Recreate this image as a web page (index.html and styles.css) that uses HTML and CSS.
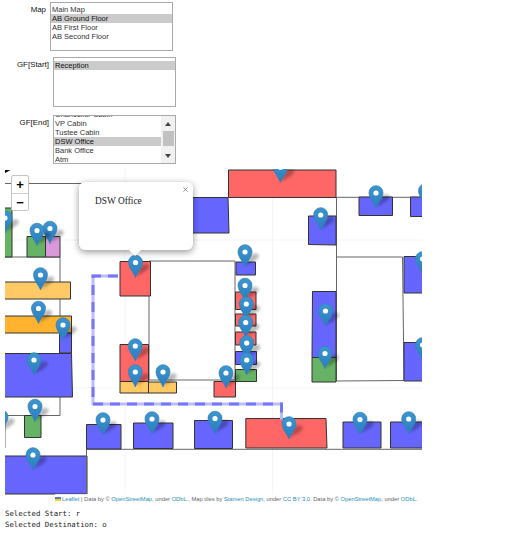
FILE: index.html
```html
<!DOCTYPE html>
<html lang="en">
<head>
<meta charset="utf-8">
<title>Floor map</title>
<link rel="stylesheet" href="styles.css">
</head>
<body>
<form class="controls">
  <div class="field field-map"><label>Map</label>
    <ul class="list"><li>Main Map</li><li class="selected">AB Ground Floor</li><li>AB First Floor</li><li>AB Second Floor</li></ul></div>
  <div class="field field-start"><label>GF[Start]</label>
    <ul class="list"><li class="selected">Reception</li></ul></div>
  <div class="field field-end"><label>GF[End]</label>
    <div class="list scroll-list">
      <ul class="options"><li>Chancellor Cabin</li><li>VP Cabin</li><li>Tustee Cabin</li><li class="selected">DSW Office</li><li>Bank Office</li><li>Atm</li></ul>
      <div class="scrollbar"><i class="up"></i><i class="thumb"></i><i class="down"></i></div>
    </div></div>
</form>
<main class="map">
<svg class="plan" viewBox="5 169 417 334" width="417" height="334">
  <defs>
    <linearGradient id="pin" x1="0" y1="0" x2="0" y2="1"><stop offset="0" stop-color="#3c96d0"/><stop offset="1" stop-color="#2a7dbd"/></linearGradient>
    <filter id="soft" x="-50%" y="-50%" width="200%" height="200%"><feGaussianBlur stdDeviation="1.6"/></filter>
    <g id="m">
      <path d="M0-1L6-12Q12-16 14-11Q13-7 0-1Z" fill="#000" opacity=".28" filter="url(#soft)"/>
      <path d="M0 0C-1.4-4.5-7-9.6-7-15.3A7 7 0 0 1 7-15.3C7-9.6 1.4-4.5 0 0Z" fill="url(#pin)" stroke="#337fb5" stroke-width=".7"/>
      <circle cy="-15" r="2.6" fill="#fff"/>
    </g>
  </defs>
  <path class="tiles" d="M125 169V503M272.500 169V503M5 240H422M5 388H422"/>
  <path class="corner" d="M5 170H10.500L8 171.500L5 173Z"/>
  <g class="walls">
    <path d="M5 183.500H85M5 257H60V282M60 299V316M5 415.500H60V397M5 415V448M86.500 449.300H422M336 197.300H422M336.500 197V381L404 380.500M336.500 257H402.500L404 380M149 261H235V380H149Z"/>
  </g>
  <g class="rooms">
    <path class="green" d="M3 208H12V257H3ZM27 236.500H45.500V257H27ZM24.500 415.500H41V437.500H24.500ZM235.500 369.500H256.500V381.500H235.500ZM312 357.500H336V382H312Z"/>
    <path class="violet" d="M45.500 236.500H60V257H45.500Z"/>
    <path class="amber" d="M3 282H70.500V299H3ZM120 381.500H148.500V393H120ZM148.500 382H176.500V393H148.500Z"/>
    <path class="orange" d="M3 316H71.500V333H3Z"/>
    <path class="blue" d="M59.500 333H71.500V353H59.500ZM3 353.500H71.500L72.500 397H3ZM3 456H87V494H3ZM86.500 424.500H121V449H86.500ZM133.500 423H173V448.500H133.500ZM194.500 420.500H232.500V448.500H194.500ZM343 422H381V448H343ZM390.500 422H424V448H390.500ZM190 197.500H228L229 233H190ZM236 262H255.500V275H236ZM308.500 216H336V245L308.500 244.500ZM359 197H392.500V215.500H359ZM410.500 197H424V216.500H410.500ZM404 256.500H424V293H404ZM404 342.500H424V381H404ZM312.500 291.500H336V357.500H312ZM235.500 351.500H256.500V364.500H235.500Z"/>
    <path class="red" d="M228.500 170H336V197.500H228.500ZM120 261.500H150.500V296H120ZM120 344.500H148.500V381.500H120ZM214 381.500H235.500V397H214ZM235.500 292H256V309.500H235.500ZM235.500 314H256V326H235.500ZM235.500 332H256V345H235.500ZM245.800 418.500H326L327 448H245.800Z"/>
  </g>
  <path class="walls" d="M86.500 449V494"/>
  <path class="route-base" d="M118 276H93V404H281.500V420"/>
  <path class="route-dash" d="M118 276H93V404H281.500V420"/>
  <use href="#m" x="280.500" y="182.500"/><use href="#m" x="425.500" y="206"/><use href="#m" x="376" y="208"/>
  <use href="#m" x="320.700" y="230"/><use href="#m" x="5" y="233"/><use href="#m" x="50" y="243.500"/><use href="#m" x="37" y="245.500"/>
  <use href="#m" x="245" y="267"/><use href="#m" x="422.500" y="274"/><use href="#m" x="135.500" y="277.500"/>
  <use href="#m" x="40.500" y="290"/><use href="#m" x="245" y="300.500"/><use href="#m" x="246.300" y="319"/>
  <use href="#m" x="38.500" y="323.500"/><use href="#m" x="325.500" y="326"/><use href="#m" x="245.700" y="337.500"/>
  <use href="#m" x="63" y="340"/><use href="#m" x="246.700" y="358"/><use href="#m" x="422.500" y="360"/><use href="#m" x="135.300" y="361"/>
  <use href="#m" x="325" y="368.500"/><use href="#m" x="34" y="375"/><use href="#m" x="246.700" y="375"/>
  <use href="#m" x="135.300" y="387"/><use href="#m" x="163" y="387"/><use href="#m" x="226" y="388"/>
  <use href="#m" x="35" y="421.500"/><use href="#m" x="1" y="432"/><use href="#m" x="215" y="433.500"/><use href="#m" x="152" y="434"/>
  <use href="#m" x="360" y="434.500"/><use href="#m" x="408.700" y="434"/><use href="#m" x="103" y="435"/><use href="#m" x="289" y="439"/><use href="#m" x="33" y="470"/>
</svg>
<div class="zoom"><span>+</span><span>−</span></div>
<div class="popup">DSW Office<svg class="close" viewBox="0 0 6 6"><path d="M.5.500L5.500 5.500M5.500.500L.5 5.500"/></svg></div>
<div class="credit"><svg class="flag" viewBox="0 0 6 4"><path fill="#4c7be1" d="M0 0H6V2H0Z"/><path fill="#ffd500" d="M0 2H6V4H0Z"/></svg><svg class="credit-text" width="358" height="9"><text x="0" y="6.500" textLength="355.500" lengthAdjust="spacingAndGlyphs"><tspan class="link">Leaflet</tspan> | Data by © <tspan class="link">OpenStreetMap</tspan>, under <tspan class="link">ODbL</tspan>., Map tiles by <tspan class="link">Stamen Design</tspan>, under <tspan class="link">CC BY 3.0</tspan>. Data by © <tspan class="link">OpenStreetMap</tspan>, under <tspan class="link">ODbL</tspan>.</text></svg></div>
</main>
<pre class="output">Selected Start: r
Selected Destination: o</pre>
</body>
</html>
```
FILE: styles.css
```css
* { box-sizing: border-box; }
body { margin: 0; width: 527px; height: 533px; overflow: hidden; background: #fff; font-family: "Liberation Sans", Arial, sans-serif; }
.controls { height: 169px; padding-top: 2px; font-size: 7.5px; color: #222; }
.field { display: flex; }
.field label { width: 49px; text-align: right; line-height: 9px; padding-top: 3px; margin-right: 4px; font-size: 7.9px; color: #111; }
.field ul { list-style: none; margin: 0; padding: 0; }
.list { width: 123px; height: 50px; border: 1px solid #aaa; overflow: hidden; }
.list li { height: 9px; line-height: 9px; padding-left: 1px; color: #333; white-space: nowrap; }
.list .selected { background: #cbcbcb; color: #111; }
.field-map label { width: 46px; }
.field-map .list { height: 49px; padding-top: 2px; }
.field-start { margin-top: 6px; }
.field-start .list { padding-top: 3px; }
.field-end { margin-top: 8px; }
.field-end .list { height: 49px; }
.scroll-list { display: flex; }
.options { flex: 1; position: relative; top: -6px; }
.scrollbar { width: 14px; background: #f1f1f1; display: flex; flex-direction: column; align-items: center; padding: 6px 0 5px; }
.up, .down { border: 3px solid transparent; }
.up { border-top: 0; border-bottom: 4px solid #444; }
.down { border-bottom: 0; border-top: 4px solid #444; margin-top: auto; }
.thumb { width: 11px; height: 15px; background: #c1c1c1; margin-top: 5px; }
.map { position: relative; width: 417px; height: 334px; margin-left: 5px; overflow: hidden; }
.plan { display: block; }
.tiles { stroke: #f4f4f4; fill: none; }
.corner { fill: #111; }
.walls { fill: none; stroke: #666; stroke-width: 1; }
.rooms { stroke: #333; stroke-width: 1; }
.green { fill: #66b366; }
.violet { fill: #db99db; }
.amber { fill: #ffc966; }
.orange { fill: #ffb32f; }
.blue { fill: #6666ff; }
.red { fill: #ff6666; }
.route-base, .route-dash { fill: none; stroke-width: 3; }
.route-base { stroke: #bbbbff; }
.route-dash { stroke: #7777f4; stroke-dasharray: 10 7; }
.zoom { position: absolute; left: 6px; top: 6px; width: 18px; height: 36px; border: 1px solid #c4c4c4; border-radius: 2px; background: #fff; display: grid; grid-template-rows: 1fr 1fr; }
.zoom span { display: flex; align-items: center; justify-content: center; font: bold 13px/1 "Liberation Sans", sans-serif; color: #000; }
.zoom span + span { border-top: 1px solid #ccc; }
.popup { position: absolute; left: 74px; top: 13px; width: 114px; height: 68px; padding: 13px 0 0 16px; border-radius: 6px; background: #fff; box-shadow: 0 2px 7px rgba(0, 0, 0, .42); font: 9.4px/12px "Liberation Serif", serif; color: #222; }
.popup::after { content: ""; position: absolute; left: 50px; top: 68px; border: 6px solid transparent; border-top-color: #fff; border-bottom: 0; }
.close { position: absolute; right: 5px; top: 5px; width: 5px; height: 5px; fill: none; stroke: #777; stroke-width: .9; }
.credit { position: absolute; right: 0; bottom: 0; width: 367px; height: 9px; display: flex; align-items: center; background: rgba(255, 255, 255, .8); }
.flag { width: 6px; height: 4px; margin-right: 1px; }
.credit-text { font-size: 6.1px; fill: #666; }
.link { fill: #2b8fb8; }
.output { margin: 6px 0 0 5px; font: 7.35px/10.5px "DejaVu Sans Mono", monospace; color: #222; }
```
